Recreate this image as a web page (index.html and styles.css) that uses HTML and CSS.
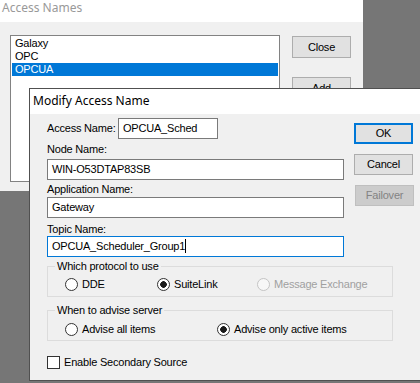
FILE: index.html
```html
<!DOCTYPE html>
<html lang="en">
<head>
    <meta charset="UTF-8">
    <title>Modify Access Name</title>
    <link rel="stylesheet" href="styles.css">
</head>
<body>
    <div class="desktop">
        <div class="window back">
            <div class="titlebar">Access Names</div>
            <div class="back-body">
                <div class="listbox">
                    <div class="list-item">Galaxy</div>
                    <div class="list-item">OPC</div>
                    <div class="list-item selected">OPCUA</div>
                </div>
                <div class="buttons">
                    <div class="btn">Close</div>
                    <div class="btn">Add</div>
                </div>
            </div>
        </div>

        <div class="window dialog">
            <div class="titlebar">Modify Access Name</div>
            <div class="dialog-body">
                <div class="top">
                    <div class="fields">
                        <div class="name-row">
                            <span class="label">Access Name:</span>
                            <div class="field">OPCUA_Sched</div>
                        </div>
                        <div class="label node-label">Node Name:</div>
                        <div class="field node-field">WIN-O53DTAP83SB</div>
                        <div class="label app-label">Application Name:</div>
                        <div class="field app-field">Gateway</div>
                        <div class="label topic-label">Topic Name:</div>
                        <div class="field focused">OPCUA_Scheduler_Group1<span class="caret"></span></div>
                    </div>
                    <div class="buttons">
                        <div class="btn default">OK</div>
                        <div class="btn">Cancel</div>
                        <div class="btn disabled">Failover</div>
                    </div>
                </div>

                <fieldset class="group protocol">
                    <legend>Which protocol to use</legend>
                    <div class="options">
                        <div class="option opt-dde"><span class="radio"></span>DDE</div>
                        <div class="option opt-suite"><span class="radio checked"></span>SuiteLink</div>
                        <div class="option disabled"><span class="radio"></span>Message Exchange</div>
                    </div>
                </fieldset>

                <fieldset class="group advise">
                    <legend>When to advise server</legend>
                    <div class="options">
                        <div class="option opt-all"><span class="radio"></span>Advise all items</div>
                        <div class="option"><span class="radio checked"></span>Advise only active items</div>
                    </div>
                </fieldset>

                <div class="check-row"><span class="check"></span>Enable Secondary Source</div>
            </div>
        </div>
    </div>
</body>
</html>
```

FILE: styles.css
```css
* {
    box-sizing: border-box;
    margin: 0;
    padding: 0;
}

body {
    width: 420px;
    height: 383px;
    overflow: hidden;
    background: #767676;
    font-family: 'Liberation Sans', Arial, sans-serif;
    font-size: 11px;
    line-height: 13px;
    letter-spacing: -0.2px;
    color: #000;
}

.desktop {
    position: relative;
    width: 420px;
    height: 383px;
    overflow: hidden;
}

/* windows sit on the desktop at their own place */
.window {
    position: absolute;
    background: #f0f0f0;
}

.window.back {
    left: 0;
    top: 0;
    width: 363px;
    height: 191px;
}

.window.dialog {
    left: 29px;
    top: 88px;
    width: 391px;
    height: 293px;
    border: 1px solid #505050;
    border-right: none;
}

.titlebar {
    background: #fff;
    font-family: 'Noto Sans', sans-serif;
    font-size: 12px;
    line-height: 16px;
    letter-spacing: 0;
    white-space: nowrap;
}

.back .titlebar {
    height: 22px;
    padding-left: 2px;
    color: #999;
}

.dialog .titlebar {
    height: 25px;
    padding: 4px 0 0 3px;
}

/* back window */
.back-body {
    display: flex;
    padding: 13px 0 0 10px;
}

.listbox {
    width: 270px;
    height: 147px;
    background: #fff;
    border: 1px solid #828282;
    padding: 1px;
}

.list-item {
    height: 13px;
    padding-left: 3px;
}

.list-item.selected {
    background: #0078d7;
    color: #fff;
}

.back .buttons {
    display: flex;
    flex-direction: column;
    gap: 19px;
    margin: 1px 0 0 12px;
}

.btn {
    width: 59px;
    height: 22px;
    display: flex;
    align-items: center;
    justify-content: center;
    background: #e1e1e1;
    border: 1px solid #adadad;
}

/* dialog */
.dialog-body {
    padding: 4px 0 0 17px;
}

.top {
    display: flex;
}

.fields {
    width: 297px;
}

.name-row {
    display: flex;
    align-items: center;
}

.name-row .field {
    width: 100px;
}

.label {
    display: block;
    height: 13px;
}

.name-row .label {
    width: 71px;
}

.field {
    height: 21px;
    background: #fff;
    border: 1px solid #7a7a7a;
    padding: 0 4px;
    line-height: 19px;
    white-space: nowrap;
    overflow: hidden;
}

.field.focused {
    border-color: #0078d7;
}

.caret {
    display: inline-block;
    width: 1px;
    height: 14px;
    background: #000;
    vertical-align: -3px;
}

.node-label { margin-top: 4px; }
.node-field { margin-top: 3px; }
.app-label { margin-top: 3px; }
.app-field { margin-top: 1px; }
.topic-label { margin-top: 5px; }

.dialog .buttons {
    display: flex;
    flex-direction: column;
    gap: 10px;
    margin: 5px 0 0 10px;
}

.dialog .btn {
    height: 21px;
}

.btn.default {
    border: 2px solid #0078d7;
}

.btn.disabled {
    margin-left: 1px;
    background: #cccccc;
    border-color: #bfbfbf;
    color: #838383;
}

/* group boxes */
.group {
    width: 346px;
    border: 1px solid #dcdcdc;
    padding: 0;
}

.group legend {
    margin-left: 7px;
    padding: 0 2px;
    line-height: 13px;
}

.protocol {
    margin-top: 3px;
}

.advise {
    margin-top: 7px;
}

.options {
    display: flex;
    padding: 5px 0 5px 17px;
}

.advise .options {
    padding: 6px 0 4px 17px;
}

.option {
    display: flex;
    align-items: center;
    height: 13px;
    white-space: nowrap;
}

.opt-dde { width: 92px; }
.opt-suite { width: 100px; }
.opt-all { width: 152px; }

.radio {
    width: 13px;
    height: 13px;
    margin-right: 4px;
    border: 1px solid #333;
    border-radius: 50%;
    background: #fff;
}

.radio.checked {
    background: radial-gradient(circle, #1a1a1a 0 3px, #fff 3.6px);
}

.option.disabled {
    color: #a0a0a0;
}

.option.disabled .radio {
    border-color: #c4c4c4;
    background: #f7f7f7;
}

.check-row {
    display: flex;
    align-items: center;
    height: 13px;
    margin-top: 15px;
}

.check {
    width: 13px;
    height: 13px;
    margin-right: 4px;
    border: 1px solid #333;
    background: #fff;
}
```
